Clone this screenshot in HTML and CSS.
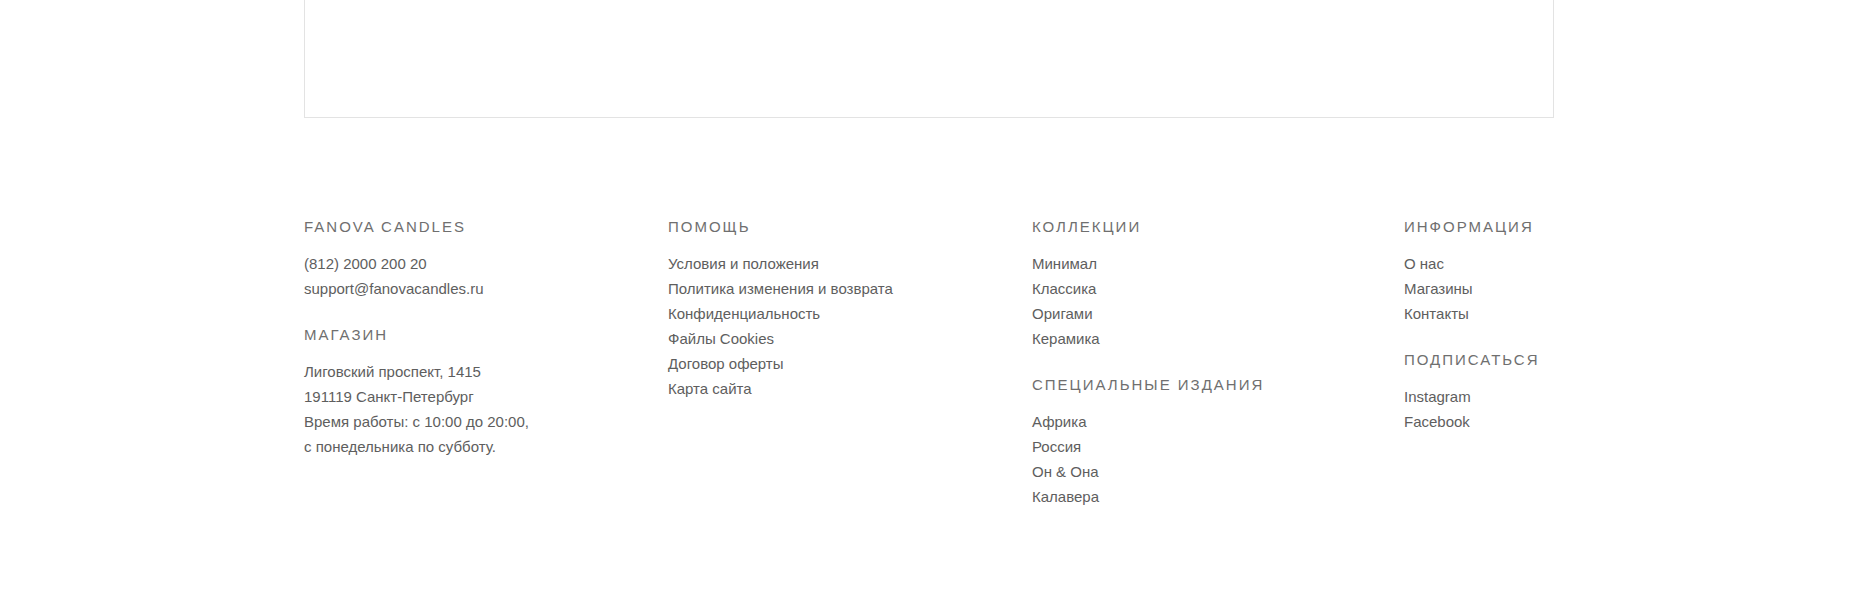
FILE: index.html
```html
<!DOCTYPE html>
<html lang="ru">
<head>
<meta charset="utf-8">
<title>Fanova Candles</title>
<link rel="stylesheet" href="styles.css">
</head>
<body>
<div class="page">
  <div class="frame"></div>
  <footer class="footer">
    <div class="col">
      <h3 class="heading">Fanova Candles</h3>
      <ul class="list">
        <li>(812) 2000 200 20</li>
        <li>support@fanovacandles.ru</li>
      </ul>
      <h3 class="heading">Магазин</h3>
      <ul class="list">
        <li>Лиговский проспект, 1415</li>
        <li>191119 Санкт-Петербург</li>
        <li>Время работы: с 10:00 до 20:00,</li>
        <li>с понедельника по субботу.</li>
      </ul>
    </div>
    <div class="col">
      <h3 class="heading">Помощь</h3>
      <ul class="list">
        <li><a href="#">Условия и положения</a></li>
        <li><a href="#">Политика изменения и возврата</a></li>
        <li><a href="#">Конфиденциальность</a></li>
        <li><a href="#">Файлы Cookies</a></li>
        <li><a href="#">Договор оферты</a></li>
        <li><a href="#">Карта сайта</a></li>
      </ul>
    </div>
    <div class="col">
      <h3 class="heading">Коллекции</h3>
      <ul class="list">
        <li><a href="#">Минимал</a></li>
        <li><a href="#">Классика</a></li>
        <li><a href="#">Оригами</a></li>
        <li><a href="#">Керамика</a></li>
      </ul>
      <h3 class="heading">Специальные издания</h3>
      <ul class="list">
        <li><a href="#">Африка</a></li>
        <li><a href="#">Россия</a></li>
        <li><a href="#">Он &amp; Она</a></li>
        <li><a href="#">Калавера</a></li>
      </ul>
    </div>
    <div class="col">
      <h3 class="heading">Информация</h3>
      <ul class="list">
        <li><a href="#">О нас</a></li>
        <li><a href="#">Магазины</a></li>
        <li><a href="#">Контакты</a></li>
      </ul>
      <h3 class="heading">Подписаться</h3>
      <ul class="list">
        <li><a href="#">Instagram</a></li>
        <li><a href="#">Facebook</a></li>
      </ul>
    </div>
  </footer>
</div>
</body>
</html>
```
FILE: styles.css
```css
html, body {
  margin: 0;
  padding: 0;
  background: #ffffff;
}
body {
  font-family: "Liberation Sans", Arial, sans-serif;
  color: #5e5e5e;
}
.page {
  width: 1250px;
  margin-left: 304px;
}
.frame {
  height: 117px;
  border: 1px solid #e3e3e3;
  border-top: none;
  background: #fff;
}
.footer {
  display: grid;
  grid-template-columns: 364px 364px 372px 1fr;
  padding-top: 99px;
  padding-bottom: 60px;
}
.heading {
  margin: 0 0 14px;
  font-size: 15px;
  line-height: 20px;
  font-weight: normal;
  text-transform: uppercase;
  letter-spacing: 2px;
  color: #6f6f6f;
}
.list {
  list-style: none;
  margin: 0 0 24px;
  padding: 0;
  font-size: 15px;
  line-height: 25px;
  color: #5e5e5e;
}
.list a {
  color: #5e5e5e;
  text-decoration: none;
}
```
